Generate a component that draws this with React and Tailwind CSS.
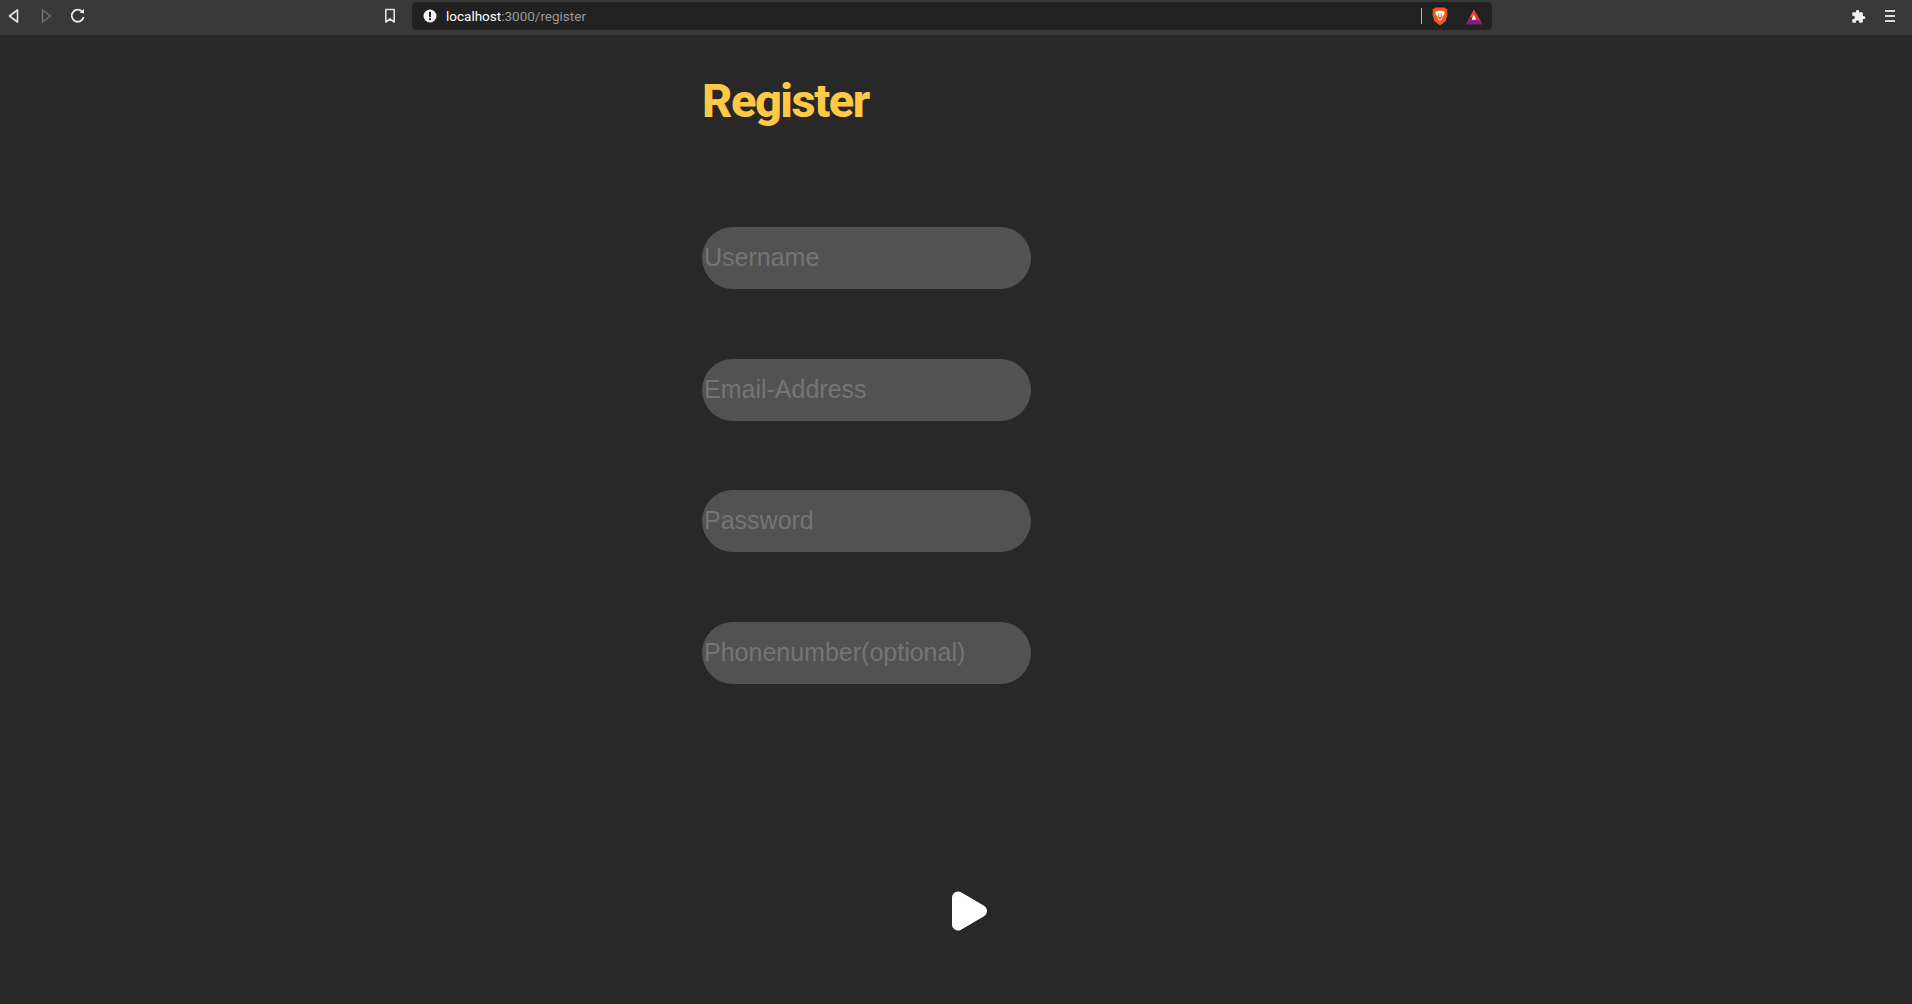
import React from "react";

const fields = ["Username", "Email-Address", "Password", "Phonenumber(optional)"];

function Brave() {
  return (
    <svg width="16" height="19" viewBox="0 0 16 19">
      <path d="M3.2 0.4H12.8L14.2 2L15.8 2.6L15 5.2L15.6 7.4L13.6 14.2L8 18.6L2.4 14.2L0.4 7.4L1 5.2L0.2 2.6L1.8 2Z" fill="#f1561f" />
      <path d="M4 4.6L6.4 3.8H9.6L12 4.6L12.8 5.6L11.6 8.6L10 10.2L10.6 11.6L8 13.8L5.4 11.6L6 10.2L4.4 8.6L3.2 5.6Z" fill="#fff" />
      <path d="M6.2 6.6H7.2V10H8.8V6.6H9.8V11L8 12.4L6.2 11Z" fill="#f1561f" />
    </svg>
  );
}

function Bat() {
  return (
    <svg width="18" height="16" viewBox="0 0 18 16">
      <path d="M9 0.5L13.2 8.5H4.8Z" fill="#ff4724" />
      <path d="M4.6 8.5L9 0.5L5.8 9Z" fill="#ff4724" />
      <path d="M9 5.6L11.6 10.8H6.4Z" fill="#fff" />
      <path d="M9 0.5L17.6 15.5L12.6 11L11.6 10.8L9 5.6Z" fill="#e0352f" />
      <path d="M0.4 15.5L5.2 11H12.8L17.6 15.5Z" fill="#7d1f7c" />
      <path d="M0.4 15.5L4.8 8.5L6.4 10.8L5.2 11.5Z" fill="#a3244f" />
    </svg>
  );
}

export default function App() {
  return (
    <div className="h-[1004px] overflow-hidden bg-[#282828] flex flex-col font-['Liberation_Sans',sans-serif]">
      <header className="h-[35px] shrink-0 bg-[#383838] flex items-start">
        <div className="flex items-center h-[32px] pl-[7px]">
          <svg width="14" height="16" viewBox="0 0 14 16" fill="none" stroke="#e8e8e8" strokeWidth="1.6" strokeLinejoin="round">
            <path d="M10.5 2L2.5 8L10.5 14Z" />
          </svg>
          <svg className="ml-[18px]" width="14" height="16" viewBox="0 0 14 16" fill="none" stroke="#777" strokeWidth="1.4" strokeLinejoin="round">
            <path d="M3.5 2L11.5 8L3.5 14Z" />
          </svg>
          <svg className="ml-[17px]" width="16" height="16" viewBox="0 0 16 16" fill="none" stroke="#ececec" strokeWidth="1.8">
            <path d="M12.6 4.2A6 6 0 1 0 13.6 9" />
            <path d="M9.6 4.4L14 5.4L14 1Z" fill="#ececec" stroke="none" />
          </svg>
          <svg className="ml-[298px]" width="12" height="16" viewBox="0 0 12 16" fill="none" stroke="#e0e0e0" strokeWidth="1.6" strokeLinejoin="round">
            <path d="M1.8 1.5H10.2V14L6 11L1.8 14Z" />
          </svg>
        </div>
        <div className="ml-[16px] mt-[2px] w-[1080px] h-[28px] rounded-[5px] bg-[#212121] flex items-center">
          <svg className="ml-[11px]" width="14" height="14" viewBox="0 0 14 14">
            <circle cx="7" cy="7" r="6.5" fill="#f2f2f2" />
            <rect x="6" y="2.8" width="2" height="5.4" fill="#212121" />
            <rect x="6" y="9.2" width="2" height="2" fill="#212121" />
          </svg>
          <span className="ml-[9px] mt-[1px] text-[13.5px] leading-none font-['Roboto',sans-serif] text-white">
            localhost<span className="text-[#9a9a9a]">:3000/register</span>
          </span>
          <span className="ml-auto w-px h-[16px] bg-[#b8b8b8]" />
          <span className="ml-[10px] flex mt-[1px]"><Brave /></span>
          <span className="ml-[17px] mr-[9px] flex mt-[1px]"><Bat /></span>
        </div>
        <div className="ml-auto flex items-center h-[32px] pr-[17px]">
          <svg width="15" height="15" viewBox="0 0 24 24" fill="#f0f0f0">
            <path d="M20.5 11H19V7a2 2 0 0 0-2-2h-4V3.5a2.5 2.5 0 0 0-5 0V5H4a2 2 0 0 0-2 2v3.8h1.5a2.7 2.7 0 0 1 0 5.4H2V20a2 2 0 0 0 2 2h3.8v-1.5a2.7 2.7 0 0 1 5.4 0V22H17a2 2 0 0 0 2-2v-4h1.5a2.5 2.5 0 0 0 0-5z" />
          </svg>
          <div className="ml-[19px] w-[10px] flex flex-col gap-[3px]">
            <span className="h-[2px] bg-[#d8d8d8]" />
            <span className="h-[2px] bg-[#d8d8d8]" />
            <span className="h-[2px] bg-[#d8d8d8]" />
          </div>
        </div>
      </header>
      <main className="flex-1 pl-[702px]">
        <h1 className="mt-[40px] h-[52px] text-[47px] leading-[52px] font-extrabold tracking-[-1.5px] font-['Roboto',sans-serif] text-[#ffc845]">
          Register
        </h1>
        <form className="mt-[100px] w-[329px] flex flex-col gap-[69.67px]">
          {fields.map((f) => (
            <input
              key={f}
              placeholder={f}
              readOnly
              className="h-[62px] w-full rounded-[31px] bg-[#525252] px-[2px] pb-[1px] text-[25px] outline-none placeholder:text-[#757575]"
            />
          ))}
        </form>
        <button className="mt-[206px] ml-[248px] block">
          <svg width="38" height="42" viewBox="0 0 38 42">
            <path d="M8 7.5L31 21L8 34.5Z" fill="#fff" stroke="#fff" strokeWidth="12" strokeLinejoin="round" />
          </svg>
        </button>
      </main>
    </div>
  );
}
